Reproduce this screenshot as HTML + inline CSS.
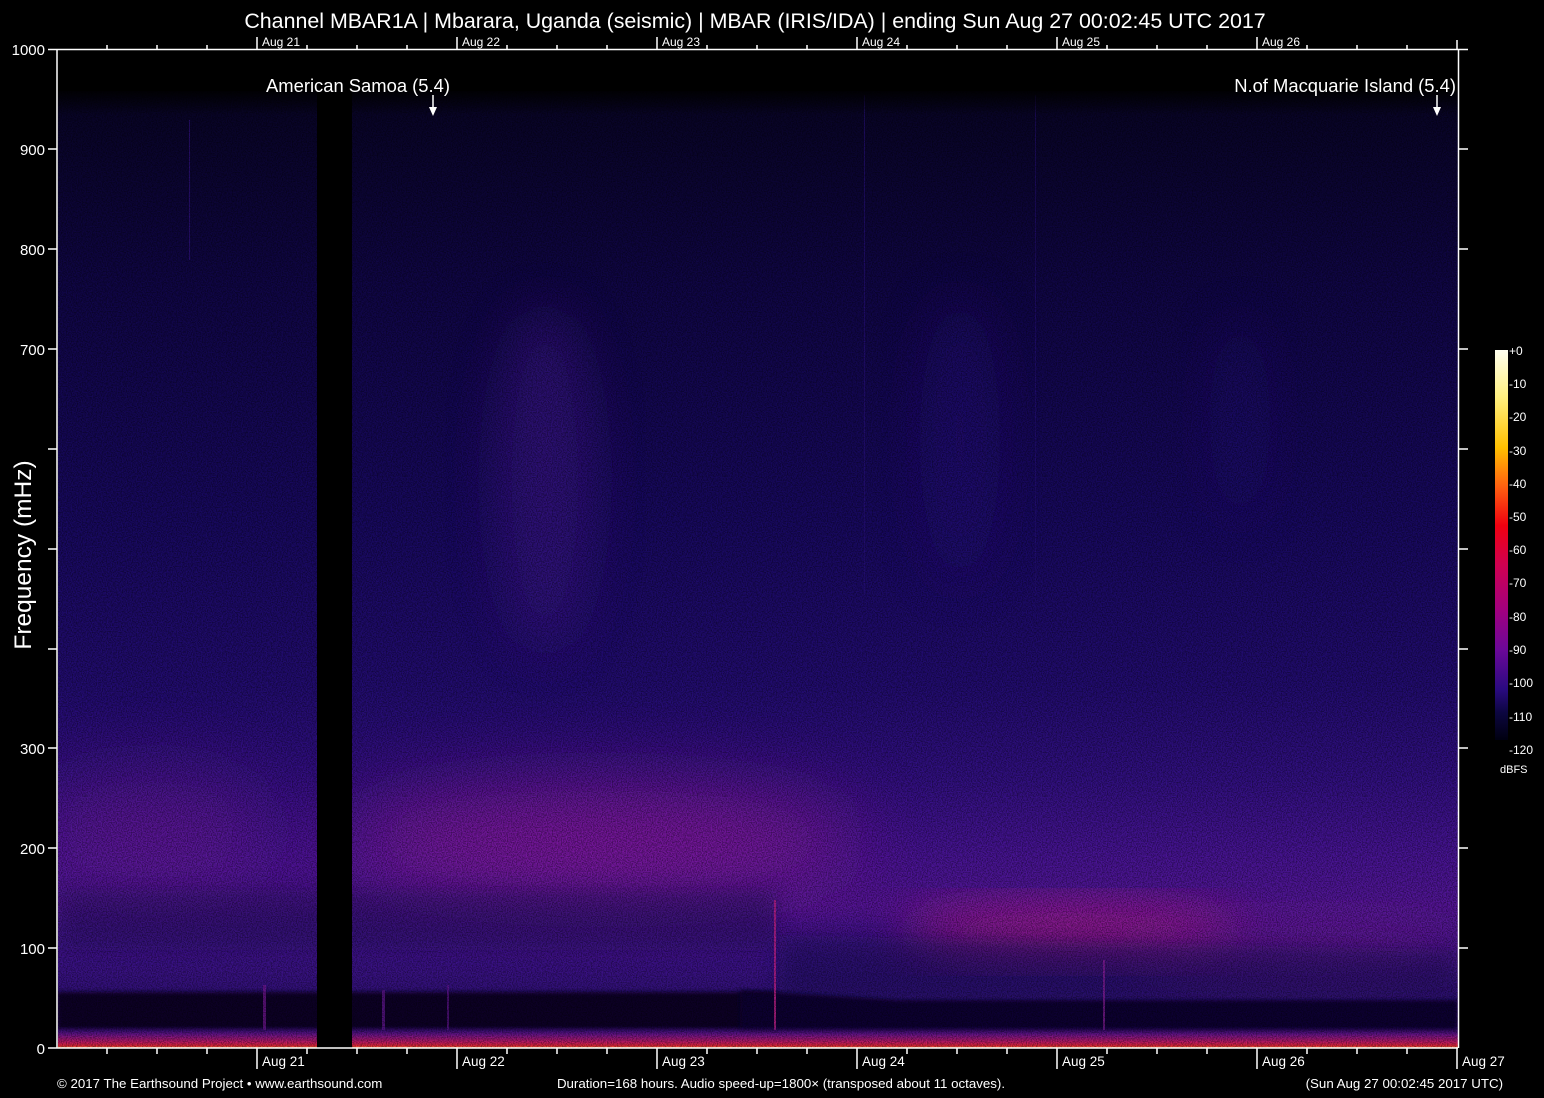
<!DOCTYPE html>
<html><head><meta charset="utf-8"><style>
html,body{margin:0;padding:0;background:#000;width:1544px;height:1098px;overflow:hidden}
svg{display:block}
text{font-family:"Liberation Sans",sans-serif;fill:#fff}
</style></head><body>
<svg width="1544" height="1098" viewBox="0 0 1544 1098" xmlns="http://www.w3.org/2000/svg">
<defs>
<linearGradient id="base" x1="0" y1="95" x2="0" y2="1048" gradientUnits="userSpaceOnUse">
<stop offset="0" stop-color="#080424"/>
<stop offset="0.2" stop-color="#100646"/>
<stop offset="0.45" stop-color="#180960"/>
<stop offset="0.62" stop-color="#220c70"/>
<stop offset="0.72" stop-color="#321082"/>
<stop offset="0.8" stop-color="#481494"/>
<stop offset="0.85" stop-color="#521696"/>
<stop offset="0.9" stop-color="#40148c"/>
<stop offset="0.94" stop-color="#32107a"/>
<stop offset="1" stop-color="#32107a"/>
</linearGradient>
<linearGradient id="bot" x1="0" y1="1026" x2="0" y2="1048" gradientUnits="userSpaceOnUse">
<stop offset="0" stop-color="#2a0c70" stop-opacity="0"/>
<stop offset="0.4" stop-color="#6a1488"/>
<stop offset="0.75" stop-color="#c01a60"/>
<stop offset="0.92" stop-color="#e02a30"/>
<stop offset="1" stop-color="#f8d060"/>
</linearGradient>
<linearGradient id="topfade" x1="0" y1="88" x2="0" y2="115" gradientUnits="userSpaceOnUse">
<stop offset="0" stop-color="#000" stop-opacity="1"/>
<stop offset="1" stop-color="#000" stop-opacity="0"/>
</linearGradient>
<linearGradient id="cbar" x1="0" y1="350" x2="0" y2="740" gradientUnits="userSpaceOnUse">
<stop offset="0" stop-color="#fffff0"/>
<stop offset="0.12" stop-color="#fff080"/>
<stop offset="0.25" stop-color="#ffc000"/>
<stop offset="0.35" stop-color="#ff6010"/>
<stop offset="0.45" stop-color="#f00010"/>
<stop offset="0.55" stop-color="#d00050"/>
<stop offset="0.67" stop-color="#a00080"/>
<stop offset="0.77" stop-color="#6a0898"/>
<stop offset="0.87" stop-color="#2a0a80"/>
<stop offset="0.93" stop-color="#0c0640"/>
<stop offset="1" stop-color="#000010"/>
</linearGradient>
<filter id="b40" x="-50%" y="-100%" width="200%" height="300%"><feGaussianBlur stdDeviation="40"/></filter>
<filter id="b20" x="-50%" y="-50%" width="200%" height="200%"><feGaussianBlur stdDeviation="25"/></filter>
<filter id="b8" x="-50%" y="-50%" width="200%" height="200%"><feGaussianBlur stdDeviation="10"/></filter>
<filter id="b3"><feGaussianBlur stdDeviation="2"/></filter>
<filter id="noise" x="0" y="0" width="100%" height="100%">
<feTurbulence type="fractalNoise" baseFrequency="0.8" numOctaves="2" seed="3"/>
<feColorMatrix type="matrix" values="0 0 0 0 0  0 0 0 0 0  0 0 0 0 0  3 0 0 0 -1.1"/>
</filter>
<clipPath id="plot"><rect x="58" y="50" width="1400" height="998"/></clipPath>
</defs>

<g clip-path="url(#plot)">
<rect x="57" y="49" width="1402" height="1000" fill="url(#base)"/>
<ellipse cx="545" cy="480" rx="50" ry="170" fill="#3e1488" opacity="0.6" filter="url(#b20)"/>
<ellipse cx="960" cy="440" rx="40" ry="140" fill="#28107e" opacity="0.5" filter="url(#b20)"/>
<ellipse cx="1240" cy="420" rx="30" ry="100" fill="#24107a" opacity="0.4" filter="url(#b20)"/>
<ellipse cx="600" cy="840" rx="260" ry="50" fill="#9a1ca0" opacity="0.7" filter="url(#b40)"/>
<ellipse cx="150" cy="830" rx="120" ry="50" fill="#7a1a9c" opacity="0.5" filter="url(#b40)"/>
<ellipse cx="1070" cy="932" rx="170" ry="22" fill="#c01e8c" opacity="0.85" filter="url(#b20)"/>
<ellipse cx="1300" cy="950" rx="180" ry="25" fill="#8a1a9c" opacity="0.55" filter="url(#b20)"/>
<rect x="57" y="890" width="720" height="60" fill="#1c0a58" opacity="0.45" filter="url(#b8)"/>
<path d="M780 935 L1458 950 L1458 1000 L780 1000 Z" fill="#1c0a5c" opacity="0.55" filter="url(#b8)"/>
<rect x="57" y="992" width="720" height="38" fill="#0e0528" filter="url(#b3)"/>
<path d="M740 990 L900 1000 L1458 1000 L1458 1032 L740 1032 Z" fill="#100630" filter="url(#b3)"/>
<rect x="774" y="900" width="2" height="130" fill="#c0208a" opacity="0.8"/>
<rect x="1103" y="960" width="2" height="70" fill="#8a209a" opacity="0.7"/>
<rect x="263" y="985" width="3" height="45" fill="#7a189a" opacity="0.7"/>
<rect x="382" y="990" width="3" height="40" fill="#6a189a" opacity="0.7"/>
<rect x="447" y="985" width="2" height="45" fill="#6a189a" opacity="0.6"/>
<rect x="189" y="120" width="1" height="140" fill="#3a1490" opacity="0.6"/>
<rect x="864" y="95" width="1" height="500" fill="#2a1080" opacity="0.6"/>
<rect x="1035" y="95" width="1" height="500" fill="#2a1080" opacity="0.5"/>
<rect x="57" y="1024" width="1402" height="24" fill="url(#bot)"/>
<rect x="57" y="49" width="1402" height="1000" filter="url(#noise)" fill="#000" opacity="0.4"/>
<rect x="57" y="49" width="1402" height="42" fill="#000"/>
<rect x="57" y="88" width="1402" height="27" fill="url(#topfade)"/>
<rect x="317" y="49" width="35" height="1000" fill="#000"/>
</g>

<g stroke="#fff" stroke-width="1.5" fill="none">
<path d="M57 49 V1048 M1458.5 49 V1048 M48 49.5 H1468 M48 1048 H1458"/>
<path d="M48 149 H57 M48 249 H57 M48 349 H57 M48 449 H57 M48 549 H57 M48 649 H57 M48 748 H57 M48 848 H57 M48 948 H57"/>
<path d="M1458 149 H1468 M1458 249 H1468 M1458 349 H1468 M1458 449 H1468 M1458 549 H1468 M1458 649 H1468 M1458 748 H1468 M1458 848 H1468 M1458 948 H1468"/>
<path d="M107 49 V45 M157 49 V45 M207 49 V45 M257 49 V37 M307 49 V45 M357 49 V45 M407 49 V45 M457 49 V37 M507 49 V45 M557 49 V45 M607 49 V45 M657 49 V37 M707 49 V45 M757 49 V45 M807 49 V45 M857 49 V37 M907 49 V45 M957 49 V45 M1007 49 V45 M1057 49 V37 M1107 49 V45 M1157 49 V45 M1207 49 V45 M1257 49 V37 M1307 49 V45 M1357 49 V45 M1407 49 V45 M1457 49 V40"/>
<path d="M107 1048 V1054 M157 1048 V1054 M207 1048 V1054 M257 1048 V1069 M307 1048 V1054 M357 1048 V1054 M407 1048 V1054 M457 1048 V1069 M507 1048 V1054 M557 1048 V1054 M607 1048 V1054 M657 1048 V1069 M707 1048 V1054 M757 1048 V1054 M807 1048 V1054 M857 1048 V1069 M907 1048 V1054 M957 1048 V1054 M1007 1048 V1054 M1057 1048 V1069 M1107 1048 V1054 M1157 1048 V1054 M1207 1048 V1054 M1257 1048 V1069 M1307 1048 V1054 M1357 1048 V1054 M1407 1048 V1054 M1457 1048 V1069"/>
<path d="M433 95 V108 M1437 95 V108"/>
</g>
<path d="M429 107 L437 107 L433 116 Z M1433 107 L1441 107 L1437 116 Z" fill="#fff"/>

<text x="755" y="28" font-size="21.4" text-anchor="middle">Channel MBAR1A | Mbarara, Uganda (seismic) | MBAR (IRIS/IDA) | ending Sun Aug 27 00:02:45 UTC 2017</text>
<g font-size="12">
<text x="262" y="46">Aug 21</text><text x="462" y="46">Aug 22</text><text x="662" y="46">Aug 23</text>
<text x="862" y="46">Aug 24</text><text x="1062" y="46">Aug 25</text><text x="1262" y="46">Aug 26</text>
</g>
<g font-size="13.5">
<text x="262" y="1066">Aug 21</text><text x="462" y="1066">Aug 22</text><text x="662" y="1066">Aug 23</text>
<text x="862" y="1066">Aug 24</text><text x="1062" y="1066">Aug 25</text><text x="1262" y="1066">Aug 26</text>
<text x="1462" y="1066">Aug 27</text>
</g>
<g font-size="15" text-anchor="end">
<text x="45" y="55">1000</text><text x="45" y="155">900</text><text x="45" y="255">800</text><text x="45" y="355">700</text>
<text x="45" y="754">300</text><text x="45" y="854">200</text><text x="45" y="954">100</text><text x="45" y="1054">0</text>
</g>
<text transform="translate(31,555) rotate(-90)" font-size="24.5" text-anchor="middle">Frequency (mHz)</text>
<text x="266" y="92" font-size="18.4">American Samoa (5.4)</text>
<text x="1456" y="92" font-size="18.4" text-anchor="end">N.of Macquarie Island (5.4)</text>

<g font-size="13.3">
<text x="57" y="1088">© 2017 The Earthsound Project • www.earthsound.com</text>
<text x="781" y="1088" text-anchor="middle">Duration=168 hours. Audio speed-up=1800× (transposed about 11 octaves).</text>
<text x="1503" y="1088" text-anchor="end">(Sun Aug 27 00:02:45 2017 UTC)</text>
</g>

<rect x="1495" y="350" width="13" height="390" fill="url(#cbar)"/>
<g font-size="12" fill="#fff">
<text x="1509" y="355">+0</text><text x="1509" y="388">-10</text><text x="1509" y="421">-20</text>
<text x="1509" y="455">-30</text><text x="1509" y="488">-40</text><text x="1509" y="521">-50</text>
<text x="1509" y="554">-60</text><text x="1509" y="587">-70</text><text x="1509" y="621">-80</text>
<text x="1509" y="654">-90</text><text x="1509" y="687">-100</text><text x="1509" y="721">-110</text>
<text x="1509" y="754">-120</text><text x="1500" y="773" font-size="11">dBFS</text>
</g>
</svg>
</body></html>
